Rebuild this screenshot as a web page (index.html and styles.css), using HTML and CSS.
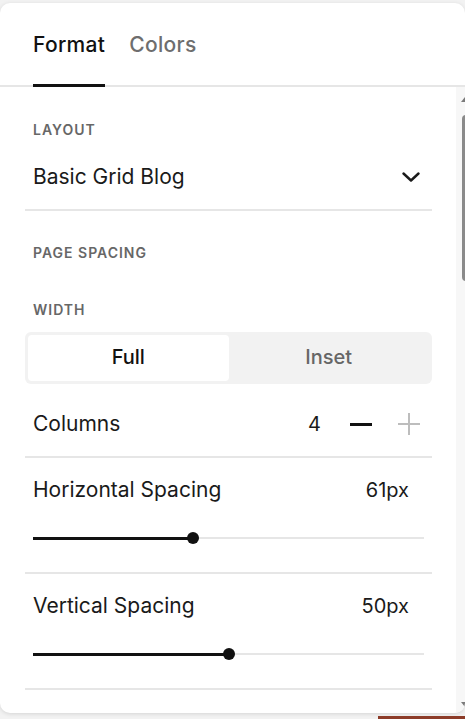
FILE: index.html
```html
<!DOCTYPE html>
<html>
<head>
<meta charset="utf-8">
<link rel="stylesheet" href="styles.css">
</head>
<body>
<div class="panel">
  <div class="tabs">
    <div class="tab active">Format</div>
    <div class="tab">Colors</div>
  </div>
  <div class="main">
    <div class="content">
      <div class="label first">LAYOUT</div>
      <div class="select">
        <span class="text">Basic Grid Blog</span>
        <svg class="chev" width="18" height="10" viewBox="0 0 18 10"><path d="M1.5 1.5 L9 8.5 L16.5 1.5" fill="none" stroke="#1a1a1a" stroke-width="2.4" stroke-linecap="round" stroke-linejoin="round"/></svg>
      </div>
      <div class="label spacing">PAGE SPACING</div>
      <div class="label width">WIDTH</div>
      <div class="segmented">
        <div class="seg on">Full</div>
        <div class="seg">Inset</div>
      </div>
      <div class="row columns">
        <span class="text">Columns</span>
        <div class="stepper">
          <span class="num">4</span>
          <span class="minus"></span>
          <span class="plus"></span>
        </div>
      </div>
      <div class="slider-row">
        <div class="slider-head"><span class="text">Horizontal Spacing</span><span class="value">61px</span></div>
        <div class="slider"><div class="fill" style="width:40.9%"><span class="thumb"></span></div></div>
      </div>
      <div class="slider-row">
        <div class="slider-head"><span class="text">Vertical Spacing</span><span class="value">50px</span></div>
        <div class="slider"><div class="fill" style="width:50.1%"><span class="thumb"></span></div></div>
      </div>
    </div>
    <div class="scrollbar">
      <div class="arrow up"></div>
      <div class="thumbbar"></div>
      <div class="arrow down"></div>
    </div>
  </div>
</div>
<div class="below"></div>
</body>
</html>
```
FILE: styles.css
```css
html, body {
  margin: 0;
  padding: 0;
}
body {
  background: #f2f2f2;
  width: 465px;
  height: 719px;
  overflow: hidden;
  font-family: Inter, "Liberation Sans", sans-serif;
  color: #1a1a1a;
}
.panel {
  margin-top: 3px;
  height: 710px;
  background: #fff;
  border-radius: 10px;
  box-shadow: 0 1px 4px rgba(0,0,0,0.12);
  display: flex;
  flex-direction: column;
  overflow: hidden;
}
.tabs {
  height: 82px;
  border-bottom: 2px solid #e6e6e6;
  display: flex;
  padding-left: 33px;
  gap: 24px;
  flex-shrink: 0;
}
.tab {
  font-size: 21px;
  font-weight: 500;
  color: #6e6e6e;
  line-height: 24px;
  padding-top: 30px;
  height: 52px;
  letter-spacing: 0.3px;
}
.tab.active {
  color: #111;
  font-weight: 500;
  border-bottom: 3px solid #111;
  height: 51px;
  margin-bottom: -2px;
}
.main {
  flex: 1;
  display: flex;
  min-height: 0;
}
.content {
  flex: 1;
  padding: 0 24px 0 25px;
  overflow: hidden;
}
.label {
  font-size: 14px;
  line-height: 16px;
  font-weight: 600;
  letter-spacing: 1px;
  color: #676767;
  padding-left: 8px;
}
.label.first { margin-top: 35px; }
.label.spacing { margin-top: 34px; }
.label.width { margin-top: 41px; }
.text {
  font-size: 21px;
  line-height: 24px;
  color: #1a1a1a;
}
.select {
  margin-top: 12px;
  display: flex;
  align-items: center;
  justify-content: space-between;
  padding: 15px 12px 20px 8px;
  border-bottom: 2px solid #e6e6e6;
}
.segmented {
  margin-top: 14px;
  height: 52px;
  background: #f2f2f2;
  border-radius: 6px;
  display: flex;
  padding: 3px;
  box-sizing: border-box;
}
.seg {
  flex: 1;
  display: flex;
  align-items: center;
  justify-content: center;
  font-size: 20px;
  font-weight: 500;
  color: #666;
  border-radius: 4px;
  padding-bottom: 2px;
}
.seg.on {
  background: #fff;
  color: #111;
}
.row {
  display: flex;
  align-items: center;
  justify-content: space-between;
  padding: 28px 12px 20px 8px;
  border-bottom: 2px solid #e6e6e6;
}
.stepper {
  display: flex;
  align-items: center;
}
.num {
  font-size: 20px;
  line-height: 24px;
  margin-right: 29px;
}
.minus {
  width: 22px;
  height: 3px;
  background: #111;
  margin-right: 26px;
}
.plus {
  width: 22px;
  height: 22px;
  position: relative;
}
.plus::before, .plus::after {
  content: "";
  position: absolute;
  background: #bdbdbd;
}
.plus::before { left: 0; right: 0; top: 10px; height: 2px; }
.plus::after { top: 0; bottom: 0; left: 10px; width: 2px; }
.slider-row {
  padding: 20px 0 28px 8px;
  border-bottom: 2px solid #e6e6e6;
}
.slider-head {
  display: flex;
  justify-content: space-between;
  padding-right: 23px;
}
.value {
  font-size: 20px;
  line-height: 24px;
}
.slider {
  margin-top: 35px;
  margin-right: 8px;
  height: 2px;
  background: #e6e6e6;
  position: relative;
  margin-bottom: 5px;
}
.fill {
  position: absolute;
  left: 0;
  top: -0.5px;
  height: 3px;
  background: #111;
}
.thumb {
  position: absolute;
  right: -6px;
  top: -4.5px;
  width: 12px;
  height: 12px;
  border-radius: 50%;
  background: #111;
}
.scrollbar {
  width: 9px;
  background: #f7f7f7;
  position: relative;
  overflow: hidden;
  flex-shrink: 0;
}
.thumbbar {
  position: absolute;
  top: 28px;
  left: 6px;
  width: 8px;
  height: 166px;
  background: #8a8a8a;
  border-radius: 4px;
}
.arrow {
  position: absolute;
  left: 5px;
  width: 0;
  height: 0;
  border-left: 4px solid transparent;
  border-right: 4px solid transparent;
}
.arrow.up {
  top: 10px;
  border-bottom: 5px solid #7a7a7a;
}
.arrow.down {
  bottom: 6px;
  border-top: 5px solid #7a7a7a;
}
.below {
  margin-left: 378px;
  margin-top: 3px;
  height: 3px;
  background: #8c3b28;
}
```
